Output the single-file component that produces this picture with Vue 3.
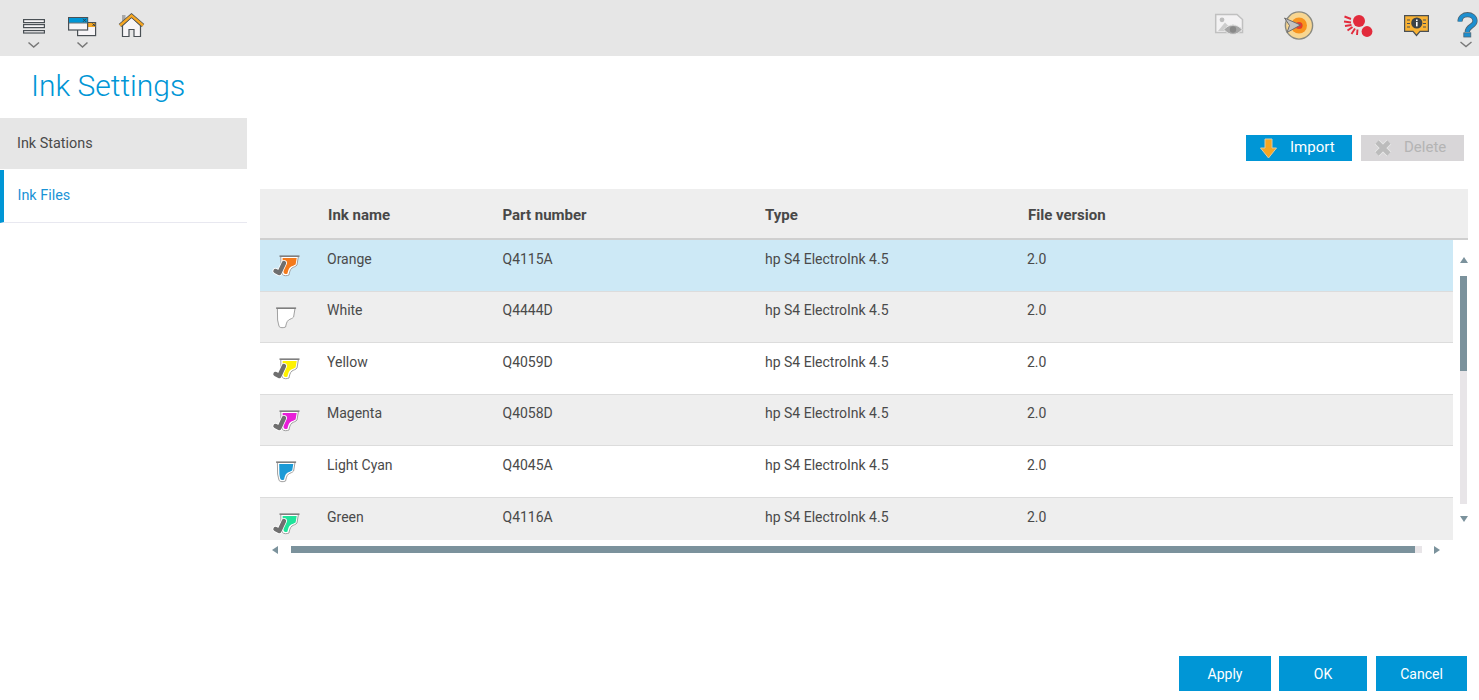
<script setup>
const rows = [
  { name: 'Orange', part: 'Q4115A', color: '#f47a1c', check: true, cls: 'sel' },
  { name: 'White', part: 'Q4444D', color: '#ffffff', check: false, cls: 'alt' },
  { name: 'Yellow', part: 'Q4059D', color: '#fff200', check: true, cls: '' },
  { name: 'Magenta', part: 'Q4058D', color: '#e81fd8', check: true, cls: 'alt' },
  { name: 'Light Cyan', part: 'Q4045A', color: '#1b9ad6', check: false, cls: '' },
  { name: 'Green', part: 'Q4116A', color: '#1fe39a', check: true, cls: 'alt' },
]
</script>

<template>
  <div class="page">
    <header class="topbar">
      <button class="tool t-menu">
        <svg width="30" height="56" viewBox="20 0 30 56">
          <g fill="#f7f5f7" stroke="#4a5055" stroke-width="1.2">
            <rect x="23.6" y="19.6" width="20.8" height="3" />
            <rect x="23.6" y="24.6" width="20.8" height="3" />
            <rect x="23.6" y="30.6" width="20.8" height="2.4" />
          </g>
          <path d="M28.5 42.5L33.7 47L39 42.5" fill="none" stroke="#777" stroke-width="1.5" />
        </svg>
      </button>
      <button class="tool t-win">
        <svg width="36" height="56" viewBox="64 0 36 56">
          <rect x="77.6" y="22.6" width="18" height="13" fill="#f7f5f7" stroke="#4a5055" stroke-width="1.2" />
          <rect x="88" y="23" width="7.2" height="4" fill="#f5a623" />
          <rect x="68.6" y="17.6" width="19" height="12.4" fill="#f7f5f7" stroke="#4a5055" stroke-width="1.2" />
          <rect x="69" y="18" width="18.4" height="4.8" fill="#0096d6" />
          <rect x="68.6" y="22.6" width="19" height=".8" fill="#4a5055" />
          <path d="M83 18.8l3 3m0-3l-3 3M92.5 23.5l2.5 2.5m0-2.5l-2.5 2.5" stroke="#33404a" stroke-width="1" />
          <path d="M77.5 42.5L82.5 47L87.5 42.5" fill="none" stroke="#777" stroke-width="1.5" />
        </svg>
      </button>
      <button class="tool t-home">
        <svg width="30" height="56" viewBox="117 0 30 56">
          <rect x="122" y="15" width="3.5" height="6" fill="#a8a8a8" />
          <path d="M122.5 25.5V36.5H129V29.5H134V36.5H140.5V25.5L131.5 17Z" fill="#f7f5f7" stroke="#4a5055" stroke-width="1.2" />
          <path d="M120 25.5L131.5 15.5L143 25.5" fill="none" stroke="#4a5055" stroke-width="3.8" />
          <path d="M120 25.5L131.5 15.5L143 25.5" fill="none" stroke="#f5a623" stroke-width="2.4" />
        </svg>
      </button>

      <div class="spacer"></div>

      <button class="tool t-pic">
        <svg width="32" height="56" viewBox="1213 0 32 56">
          <path d="M1215.7 14.5H1237L1242.5 19.5V32.5H1215.7Z" fill="#f3f2f3" stroke="#c0c0c0" stroke-width="1.5" />
          <path d="M1218 31L1225 22.5L1229.5 27L1233 24L1240 31Z" fill="#cdcdcd" />
          <circle cx="1222" cy="19.8" r="2.4" fill="#bdbdbd" />
          <path d="M1224 29.5C1228.5 23.5 1237.5 23.5 1242 29.5C1237.5 36 1228.5 36 1224 29.5Z" fill="#a6a6a6" stroke="#e6e6e6" />
          <circle cx="1233" cy="29.5" r="3.2" fill="#888" />
        </svg>
      </button>
      <button class="tool t-target">
        <svg width="32" height="56" viewBox="1283 0 32 56">
          <circle cx="1299" cy="25.5" r="13.6" fill="#f8d690" stroke="#8a8a80" stroke-width="1.4" />
          <circle cx="1299" cy="25.5" r="8" fill="#f7931e" />
          <circle cx="1299" cy="25.5" r="3.6" fill="#e53c2c" />
          <path d="M1284.5 18L1300.5 25L1287 32.5L1289.5 25.5Z" fill="#c2c2c2" stroke="#6d6d6d" stroke-width="1" />
        </svg>
      </button>
      <button class="tool t-red">
        <svg width="32" height="56" viewBox="1343 0 32 56">
          <circle cx="1359" cy="21" r="6" fill="#e22b3c" />
          <circle cx="1367" cy="31.5" r="5.4" fill="#e22b3c" />
          <path d="M1344.5 16.5L1351 19M1344 21.5L1351 22.5M1345 26L1351.5 25M1347.5 30.5L1352.5 27M1351.5 34L1355 28.5M1357 35L1357.5 29.5" stroke="#e22b3c" stroke-width="1.9" fill="none" />
        </svg>
      </button>
      <button class="tool t-info">
        <svg width="30" height="56" viewBox="1402 0 30 56">
          <path d="M1404.6 15.6H1428.4V31.4H1420L1416.5 35.5L1413 31.4H1404.6Z" fill="#f9b233" stroke="#4a5055" stroke-width="1.2" />
          <circle cx="1416.8" cy="23" r="5.6" fill="#3c4348" />
          <rect x="1416" y="19.5" width="1.6" height="1.6" fill="#fff" />
          <rect x="1416" y="22" width="1.6" height="4.4" fill="#fff" />
          <path d="M1407 20H1410M1407 23.5H1410M1407 27H1410M1423 20H1426M1423 23.5H1426M1423 27H1426" stroke="#4a5055" stroke-width="1.2" />
        </svg>
      </button>
      <button class="tool t-help">
        <svg width="24" height="56" viewBox="1455 0 24 56">
          <path d="M1460 21.5C1460 12.5 1475 12.5 1475 21C1475 26.5 1467.3 25.5 1467.3 32" fill="none" stroke="#4f6470" stroke-width="5.2" />
          <path d="M1460 21.5C1460 12.5 1475 12.5 1475 21C1475 26.5 1467.3 25.5 1467.3 32" fill="none" stroke="#1c8fd0" stroke-width="3.6" />
          <rect x="1463.8" y="32.8" width="7" height="4.2" fill="#1c8fd0" stroke="#4f6470" stroke-width=".8" />
          <path d="M1460.5 42L1466 46.5L1471.5 42" fill="none" stroke="#777" stroke-width="1.4" />
        </svg>
      </button>
    </header>

    <h1 class="title">Ink Settings</h1>

    <div class="body">
      <nav class="side">
        <div class="side-item active-group">Ink Stations</div>
        <div class="side-item current">Ink Files</div>
      </nav>

      <main class="main">
        <div class="actions">
          <button class="btn import">
            <svg width="20" height="22" viewBox="0 0 20 22">
              <path d="M7 2H14V11H18.5L10.5 21L2.5 11H7Z" fill="#f5a623" stroke="#d9c9a5" stroke-width="1" />
            </svg>
            <span>Import</span>
          </button>
          <button class="btn delete">
            <svg width="18" height="18" viewBox="0 0 18 18">
              <path d="M3 3L15 15M15 3L3 15" stroke="#e8e8e8" stroke-width="6.4" />
              <path d="M3 3L15 15M15 3L3 15" stroke="#bcbcbc" stroke-width="4.6" />
            </svg>
            <span>Delete</span>
          </button>
        </div>

        <div class="table">
          <div class="thead">
            <span></span>
            <span>Ink name</span>
            <span>Part number</span>
            <span>Type</span>
            <span>File version</span>
          </div>
          <div class="tframe">
            <div class="tbody">
              <div v-for="r in rows" :key="r.name" class="row" :class="r.cls">
                <span class="icon-cell">
                  <svg width="40" height="51" viewBox="0 0 40 51">
                    <g :transform="r.check ? '' : 'translate(-3.4 0)'">
                      <path d="M20.8 16.5H38.4L37 25C36 26.5 33.5 27 32 28C30 29.5 29.5 32.5 29 35C27 36 23.5 36 22.5 34.5C21.8 32 21.5 30 21 28Z" fill="#fff" stroke="#a0a0a0" stroke-width="1" />
                      <path d="M22.6 18H36.7L35.6 24.6C34.5 25.5 32 26 30.5 27C28.5 28.5 28 31 27.5 33.5C26 34.3 24.5 34.3 23.8 33C23.3 31 23 30 22.8 28Z" :fill="r.color" />
                      <rect x="19.5" y="15.4" width="20" height="1.5" fill="#7c7c7c" />
                    </g>
                    <g v-if="r.check" fill="none" stroke-linecap="round" stroke-linejoin="round">
                      <path d="M15.5 31L19.3 33L24 23" stroke="#ffffff" stroke-width="6" />
                      <path d="M15.5 31L19.3 33L24 23" stroke="#6f6f6f" stroke-width="4.4" />
                    </g>
                  </svg>
                </span>
                <span class="cell">{{ r.name }}</span>
                <span class="cell">{{ r.part }}</span>
                <span class="cell">hp S4 ElectroInk 4.5</span>
                <span class="cell">2.0</span>
              </div>
            </div>
            <div class="vscroll">
              <i class="arrow up"></i>
              <div class="vtrack"><div class="vthumb"></div></div>
              <i class="arrow down"></i>
            </div>
          </div>
          <div class="hscroll">
            <i class="arrow left"></i>
            <div class="htrack"><div class="hthumb"></div></div>
            <i class="arrow right"></i>
          </div>
        </div>
      </main>
    </div>

    <footer class="footer">
      <button class="btn foot apply">Apply</button>
      <button class="btn foot ok">OK</button>
      <button class="btn foot cancel">Cancel</button>
    </footer>
  </div>
</template>

<style scoped>
.page {
  height: 700px;
  display: flex;
  flex-direction: column;
  font-family: Roboto, "Liberation Sans", sans-serif;
  font-size: 14px;
  color: #4a4a4a;
  background: #fff;
  overflow: hidden;
}
button {
  font: inherit;
  border: 0;
  padding: 0;
  background: none;
}
.topbar {
  height: 56px;
  flex: none;
  display: flex;
  background: #e6e6e6;
}
.tool { display: block; height: 56px; line-height: 0; }
.tool svg { display: block; }
.t-menu { margin-left: 20px; }
.t-win { margin-left: 14px; }
.t-home { margin-left: 17px; }
.spacer { flex: 1; }
.t-target { margin-left: 38px; }
.t-red { margin-left: 28px; }
.t-info { margin-left: 27px; }
.t-help { margin-left: 23px; }

.title {
  flex: none;
  height: 62px;
  margin: 0;
  padding: 10px 0 0 31px;
  box-sizing: border-box;
  font-size: 30px;
  font-weight: 300;
  line-height: 40px;
  color: #0096d6;
}

.body {
  flex: 1;
  display: flex;
  min-height: 0;
}
.side {
  width: 247px;
  flex: none;
}
.side-item {
  height: 52px;
  box-sizing: border-box;
  line-height: 51px;
  padding-left: 17px;
  font-size: 14.4px;
}
.active-group {
  height: 51px;
  background: #e6e6e6;
}
.current {
  margin-top: 1px;
  height: 53px;
  color: #1a93d6;
  border-left: 4px solid #0096d6;
  padding-left: 13.5px;
  border-bottom: 1px solid #e8e8f0;
}
.main {
  flex: 1;
  min-width: 0;
  padding: 17px 11px 0 13px;
}
.actions {
  display: flex;
  justify-content: flex-end;
  gap: 9px;
  height: 26px;
  padding-right: 4px;
  margin-bottom: 28px;
}
.btn {
  display: flex;
  align-items: center;
  justify-content: center;
  color: #fff;
  background: #0096d6;
}
.import,
.delete {
  font-size: 15px;
  justify-content: flex-start;
  box-sizing: border-box;
}
.import span,
.delete span { margin-bottom: 2px; }
.import {
  width: 106px;
  padding-left: 12px;
}
.import span { margin-left: 12px; }
.delete {
  width: 103px;
  background: #d8d6d8;
  color: #b4b4b4;
  padding-left: 13px;
}
.delete span { margin-left: 12px; }

.thead,
.row {
  display: grid;
  grid-template-columns: 67px 175.5px 262.5px 262px 1fr;
}
.thead {
  height: 49px;
  box-sizing: content-box;
  align-items: center;
  background: #eeeeee;
  border-bottom: 2px solid #cfcfcf;
  font-size: 15px;
  font-weight: 700;
  color: #484848;
}
.thead span { padding: 3px 0 0 1px; }
.thead span:nth-child(3),
.thead span:nth-child(4) { padding-left: 0; }
.tframe {
  display: flex;
  height: 300px;
}
.tbody {
  width: 1193px;
  flex: none;
  overflow: hidden;
}
.row {
  height: 51.6px;
  box-sizing: border-box;
  border-bottom: 1px solid #dcdcdc;
  align-items: start;
}
.row.sel { background: #cde9f6; }
.row.alt { background: #eeeeee; }
.cell { padding-top: 10.6px; line-height: 16px; }
.icon-cell { height: 50px; line-height: 0; }
.icon-cell svg { display: block; }
.vscroll {
  width: 15px;
  display: flex;
  flex-direction: column;
  align-items: flex-start;
  padding: 17px 0 0 7px;
  box-sizing: border-box;
}
.vtrack {
  width: 7px;
  height: 228px;
  margin: 13px 0 12px;
  background: #e8e5e8;
}
.vthumb {
  height: 95px;
  background: #7b929c;
}
.arrow {
  display: block;
  width: 0;
  height: 0;
  border-style: solid;
  border-color: transparent;
}
.arrow.up { border-width: 0 4px 6px; border-bottom-color: #7b929c; }
.arrow.down { border-width: 6px 4px 0; border-top-color: #7b929c; }
.arrow.left { border-width: 4px 6px 4px 0; border-right-color: #7b929c; }
.arrow.right { border-width: 4px 0 4px 6px; border-left-color: #7b929c; }
.hscroll {
  display: flex;
  align-items: center;
  height: 19px;
  padding-left: 12px;
}
.htrack {
  width: 1131px;
  height: 7px;
  margin: 0 12px 0 13px;
  background: #e8e5e8;
}
.hthumb {
  width: 1124px;
  height: 7px;
  background: #7b929c;
}
.footer {
  flex: none;
  display: flex;
  justify-content: flex-end;
  gap: 8px;
  padding: 0 12px 9px 0;
}
.foot { height: 35px; }
.apply { width: 92px; }
.ok { width: 88px; }
.cancel { width: 91px; margin-left: 1px; }
</style>
